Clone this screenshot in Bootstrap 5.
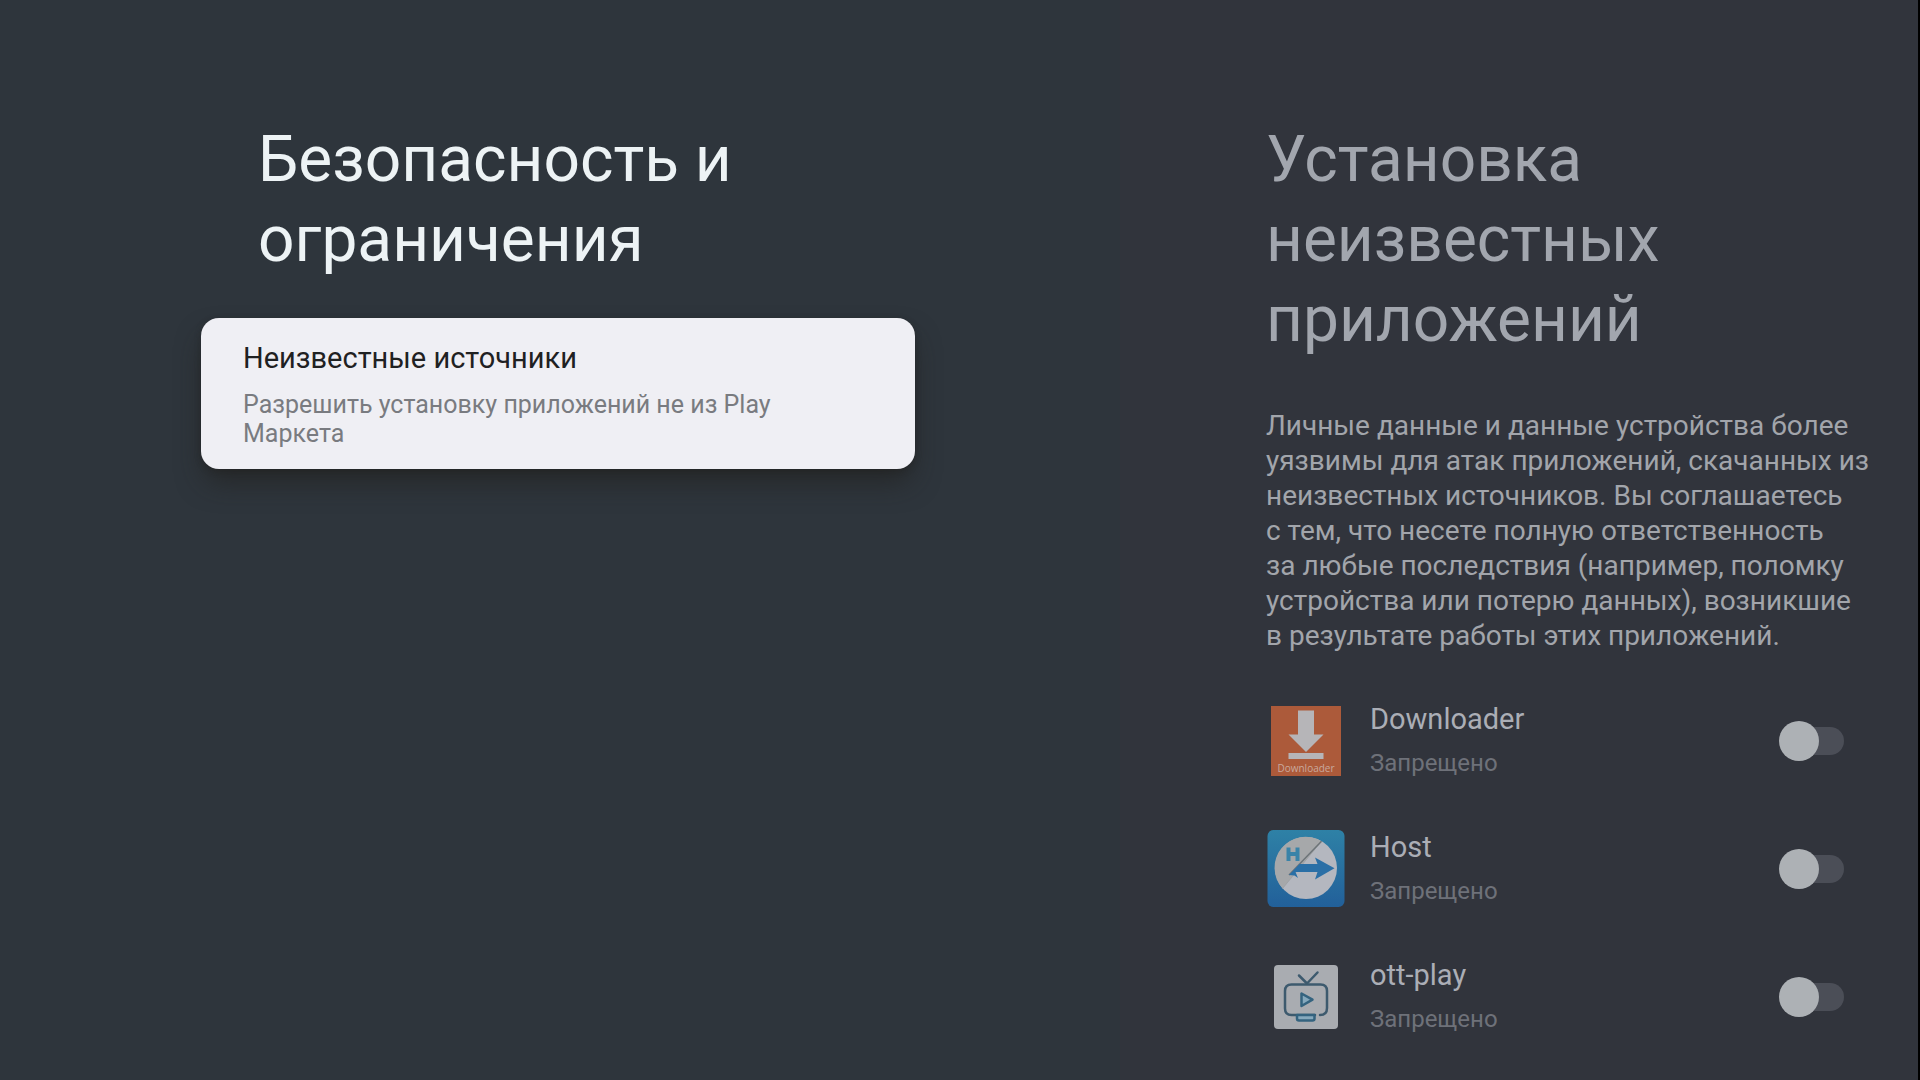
<!DOCTYPE html>
<html lang="ru">
<head>
<meta charset="utf-8">
<meta name="viewport" content="width=device-width, initial-scale=1">
<title>Безопасность и ограничения</title>
<link href="https://cdn.jsdelivr.net/npm/bootstrap@5.3.0/dist/css/bootstrap.min.css" rel="stylesheet">
<script src="https://cdn.jsdelivr.net/npm/bootstrap@5.3.0/dist/js/bootstrap.bundle.min.js"></script>
<style>
  body { background: #2e353c; font-family: Roboto, "Noto Sans", sans-serif; }
  .main-pane { padding: 120px 205px 0 201px; }
  .side-pane { padding: 120px 74px 0 146px; background: #31343c; border-right: 2px solid #000; }
  .pane-title { font-size: 64px; line-height: 80px; font-weight: 400; }
  .main-pane .pane-title { padding-left: 57px; color: #edf3f5; margin-bottom: 38px; }
  .side-pane .pane-title { color: #a2a6ae; margin-bottom: 48px; }
  .option-card { padding: 23px 40px 21px 42px; border-radius: 18px; background: #efeff4; box-shadow: 0 16px 28px -4px rgba(32, 30, 28, .65), 0 2px 6px rgba(32, 32, 32, .4); }
  .item-title { font-size: 29px; line-height: 34px; }
  .option-card .item-title { color: #1f2122; margin-bottom: 15px; }
  .option-note { font-size: 25px; line-height: 29px; color: #797b80; }
  .warning-text { font-size: 28px; line-height: 35px; color: #a2a5ab; margin-bottom: 24px; white-space: nowrap; }
  .app-row { height: 128px; }
  .app-icon { width: 78px; height: 78px; margin-left: 1px; margin-right: 25px; }
  .app-label { padding-bottom: 2px; cursor: pointer; }
  .app-label .item-title { color: #abaeb6; margin-bottom: 13px; }
  .app-state { font-size: 24px; line-height: 29px; color: #6e7179; }
  .tv-switch { appearance: none; position: relative; width: 65px; height: 40px; margin: 0; cursor: pointer; }
  .tv-switch::before { content: ""; position: absolute; inset: 6px 0 6px 8px; border-radius: 14px; background: #4b4e57; }
  .tv-switch::after { content: ""; position: absolute; left: 0; top: 0; width: 40px; height: 40px; border-radius: 50%; background: #adb1b5; }
  .tv-switch:checked::after { left: 25px; background: #8ab4f8; }
</style>
</head>
<body>
<div class="container-fluid p-0">
  <div class="row g-0 min-vh-100">
    <main class="col-7 main-pane">
      <h1 class="pane-title">Безопасность и<br>ограничения</h1>
      <button type="button" class="option-card d-block w-100 border-0 text-start">
        <span class="item-title d-block">Неизвестные источники</span>
        <span class="option-note d-block">Разрешить установку приложений не из Play<br>Маркета</span>
      </button>
    </main>
    <aside class="col-5 side-pane">
      <h2 class="pane-title">Установка<br>неизвестных<br>приложений</h2>
      <p class="warning-text">Личные данные и данные устройства более<br>уязвимы для атак приложений, скачанных из<br>неизвестных источников. Вы соглашаетесь<br>с тем, что несете полную ответственность<br>за любые последствия (например, поломку<br>устройства или потерю данных), возникшие<br>в результате работы этих приложений.</p>
      <ul class="list-unstyled mb-0">
        <li class="app-row d-flex align-items-center">
          <svg class="app-icon flex-shrink-0" viewBox="0 0 78 78" aria-hidden="true">
            <rect x="4" y="4" width="70" height="70" fill="#ac5a3a"/>
            <path d="M31 8.500h16v24h9.500L39 50 21.500 32.500H31z" fill="#b6b5b8"/>
            <rect x="21.500" y="51" width="35" height="6" fill="#b6b5b8"/>
            <text x="39" y="70" text-anchor="middle" font-family="Open Sans, sans-serif" font-size="10" fill="#c9a99d">Downloader</text>
          </svg>
          <label class="app-label flex-grow-1" for="sw-downloader"><span class="item-title d-block">Downloader</span><span class="app-state d-block">Запрещено</span></label>
          <input class="tv-switch" type="checkbox" role="switch" id="sw-downloader">
        </li>
        <li class="app-row d-flex align-items-center">
          <svg class="app-icon flex-shrink-0" viewBox="0 0 78 78" aria-hidden="true">
            <defs><linearGradient id="hostBlue" x1="0" y1="0" x2="0" y2="1"><stop offset="0" stop-color="#2e81a6"/><stop offset="1" stop-color="#22609a"/></linearGradient></defs>
            <rect x=".5" y="0" width="77" height="77" rx="6" fill="url(#hostBlue)"/>
            <circle cx="39" cy="38" r="31" fill="#b4b7bf"/>
            <path d="M54.500 11.200A31 31 0 0 0 15.500 58.500z" fill="#a6a8aa"/>
            <path d="M54.500 11.200L15.500 58.500" stroke="#a0a3a6" stroke-width="1" fill="none"/>
            <path d="M54.500 11.200L22 45" stroke="#6d7478" stroke-width="1.500" fill="none"/>
            <path d="M19.500 17.500h4v4.500h5v-4.500h4V31h-4v-5h-5v5h-4z" fill="#3a83a8"/>
            <path d="M22 45l10.500-11H50.500L48 27.500 67.500 38.300 48 49.500l2.500-7.500H28.500L31 48 27.500 45.500z" fill="#2a6fa6"/>
          </svg>
          <label class="app-label flex-grow-1" for="sw-host"><span class="item-title d-block">Host</span><span class="app-state d-block">Запрещено</span></label>
          <input class="tv-switch" type="checkbox" role="switch" id="sw-host">
        </li>
        <li class="app-row d-flex align-items-center">
          <svg class="app-icon flex-shrink-0" viewBox="0 0 78 78" aria-hidden="true">
            <rect x="7" y="7" width="64" height="64" rx="4" fill="#a9acb1"/>
            <g fill="none" stroke="#3d5a6e" stroke-width="2.500" stroke-linecap="round" stroke-linejoin="round">
              <path d="M32 17.500l8 8 10.500-11"/>
              <path d="M53 57q7 0 7-7V33q0-6.500-6.500-6.500h-29Q18 26.500 18 33v17.500Q18 57 24.500 57H48"/>
              <path d="M34.500 35.500v12.500l11-6.300z" fill="#86a9bd" stroke="#34637f"/>
              <path d="M30 57v3.500q0 2 2 2h13.500q2 0 2-2V57z" fill="#86a9bd" stroke="#34637f"/>
            </g>
          </svg>
          <label class="app-label flex-grow-1" for="sw-ott"><span class="item-title d-block">ott-play</span><span class="app-state d-block">Запрещено</span></label>
          <input class="tv-switch" type="checkbox" role="switch" id="sw-ott">
        </li>
      </ul>
    </aside>
  </div>
</div>
</body>
</html>
